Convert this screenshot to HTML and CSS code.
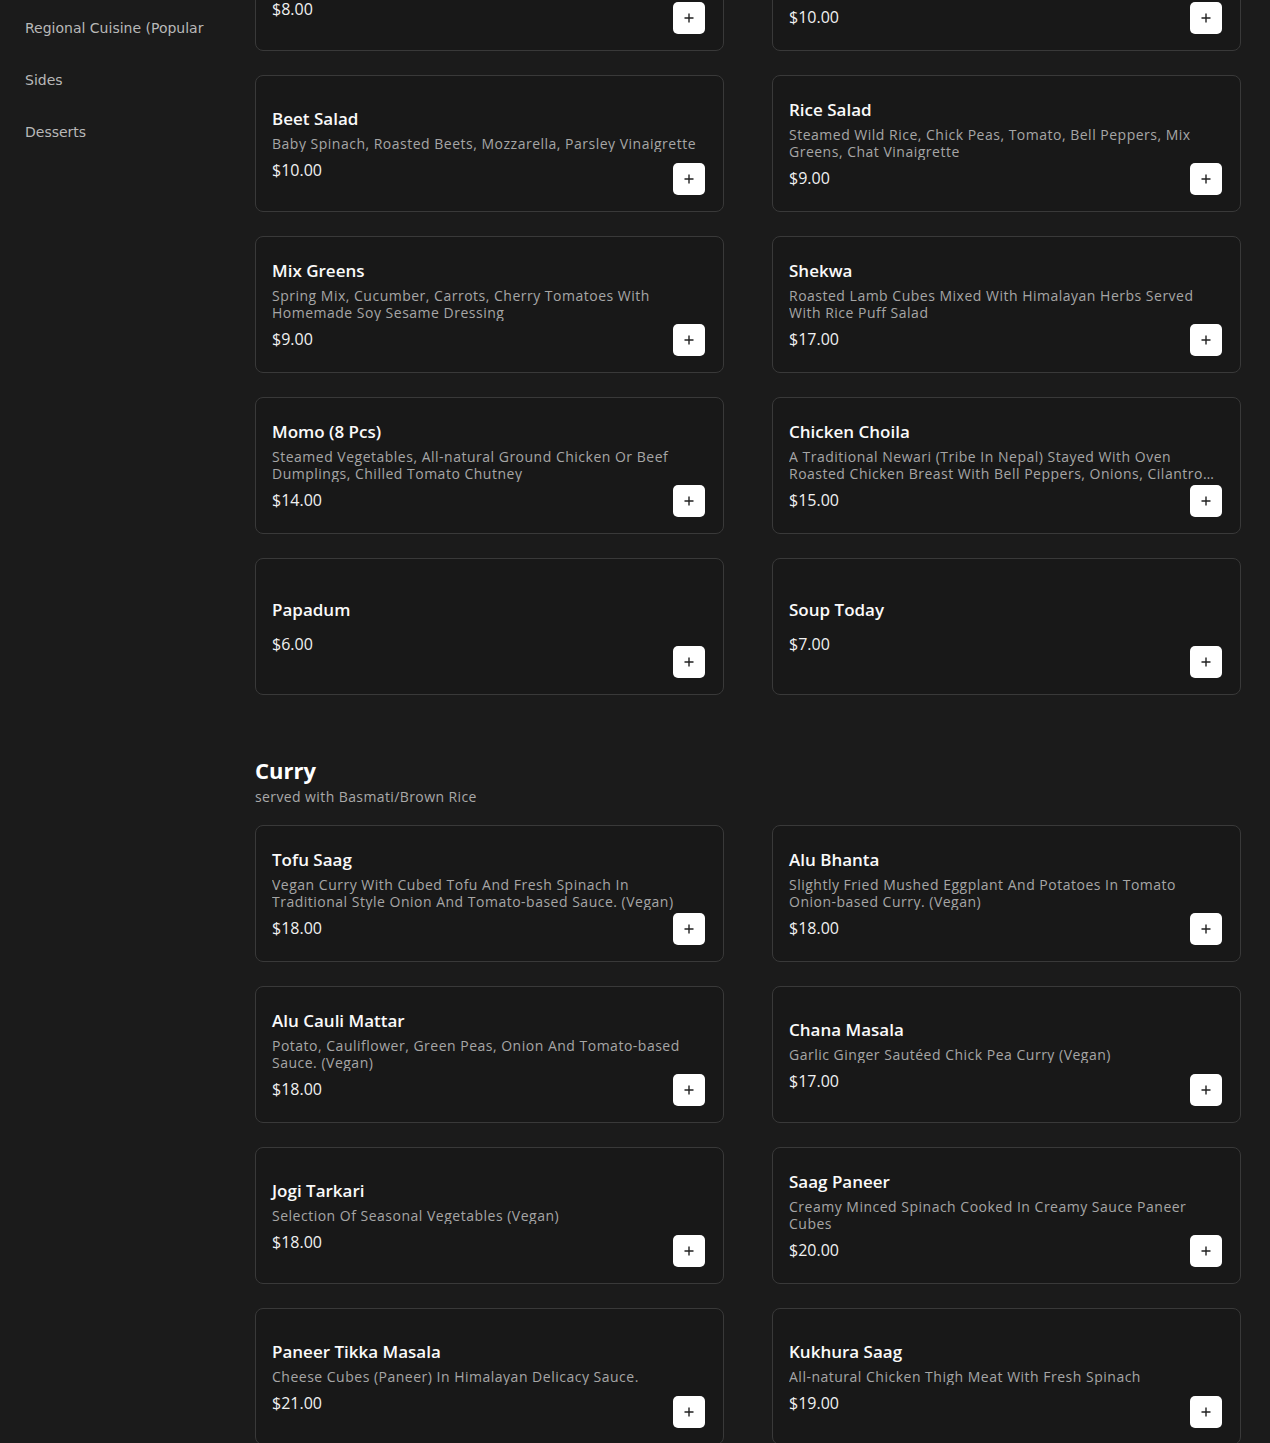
FILE: index.html
```html
<!DOCTYPE html>
<html lang="en">
<head>
  <meta charset="UTF-8">
  <title>Menu</title>
  <meta name="viewport" content="width=device-width, initial-scale=1.0">
  <link rel="stylesheet" href="styles.css">
</head>
<body>
  <div class="page">
    <nav class="sidebar">
      <a class="nav-link" href="#regional">Regional Cuisine (Popular Dishes)</a>
      <a class="nav-link" href="#sides">Sides</a>
      <a class="nav-link" href="#desserts">Desserts</a>
    </nav>

    <main class="main">
      <section class="section" id="appetizers">
        <h2 class="section-title">Appetizers</h2>
        <div class="grid">
          <div class="card">
            <div class="info">
              <h3 class="item-name">House Salad</h3>
              <p class="desc">Mix Greens, Cucumber, Carrots, House Dressing</p>
              <p class="price">$8.00</p>
            </div>
            <button class="add-btn"><svg width="10" height="10" viewBox="0 0 10 10"><path d="M5 0.5v9M0.5 5h9" stroke="#222" stroke-width="1.4"/></svg></button>
          </div>
          <div class="card">
            <div class="info">
              <h3 class="item-name">Chicken Salad</h3>
              <p class="desc">Grilled Chicken, Mix Greens, Tomato, Cucumber, Onion, Lemon Herb Vinaigrette Dressing</p>
              <p class="price">$10.00</p>
            </div>
            <button class="add-btn"><svg width="10" height="10" viewBox="0 0 10 10"><path d="M5 0.5v9M0.5 5h9" stroke="#222" stroke-width="1.4"/></svg></button>
          </div>
          <div class="card">
            <div class="info">
              <h3 class="item-name">Beet Salad</h3>
              <p class="desc">Baby Spinach, Roasted Beets, Mozzarella, Parsley Vinaigrette</p>
              <p class="price">$10.00</p>
            </div>
            <button class="add-btn"><svg width="10" height="10" viewBox="0 0 10 10"><path d="M5 0.5v9M0.5 5h9" stroke="#222" stroke-width="1.4"/></svg></button>
          </div>
          <div class="card">
            <div class="info">
              <h3 class="item-name">Rice Salad</h3>
              <p class="desc">Steamed Wild Rice, Chick Peas, Tomato, Bell Peppers, Mix Greens, Chat Vinaigrette</p>
              <p class="price">$9.00</p>
            </div>
            <button class="add-btn"><svg width="10" height="10" viewBox="0 0 10 10"><path d="M5 0.5v9M0.5 5h9" stroke="#222" stroke-width="1.4"/></svg></button>
          </div>
          <div class="card">
            <div class="info">
              <h3 class="item-name">Mix Greens</h3>
              <p class="desc">Spring Mix, Cucumber, Carrots, Cherry Tomatoes With Homemade Soy Sesame Dressing</p>
              <p class="price">$9.00</p>
            </div>
            <button class="add-btn"><svg width="10" height="10" viewBox="0 0 10 10"><path d="M5 0.5v9M0.5 5h9" stroke="#222" stroke-width="1.4"/></svg></button>
          </div>
          <div class="card">
            <div class="info">
              <h3 class="item-name">Shekwa</h3>
              <p class="desc">Roasted Lamb Cubes Mixed With Himalayan Herbs Served With Rice Puff Salad</p>
              <p class="price">$17.00</p>
            </div>
            <button class="add-btn"><svg width="10" height="10" viewBox="0 0 10 10"><path d="M5 0.5v9M0.5 5h9" stroke="#222" stroke-width="1.4"/></svg></button>
          </div>
          <div class="card">
            <div class="info">
              <h3 class="item-name">Momo (8 Pcs)</h3>
              <p class="desc">Steamed Vegetables, All-natural Ground Chicken Or Beef Dumplings, Chilled Tomato Chutney</p>
              <p class="price">$14.00</p>
            </div>
            <button class="add-btn"><svg width="10" height="10" viewBox="0 0 10 10"><path d="M5 0.5v9M0.5 5h9" stroke="#222" stroke-width="1.4"/></svg></button>
          </div>
          <div class="card">
            <div class="info">
              <h3 class="item-name">Chicken Choila</h3>
              <p class="desc">A Traditional Newari (Tribe In Nepal) Stayed With Oven Roasted Chicken Breast With Bell Peppers, Onions, Cilantro And Himalayan Spices</p>
              <p class="price">$15.00</p>
            </div>
            <button class="add-btn"><svg width="10" height="10" viewBox="0 0 10 10"><path d="M5 0.5v9M0.5 5h9" stroke="#222" stroke-width="1.4"/></svg></button>
          </div>
          <div class="card">
            <div class="info">
              <h3 class="item-name">Papadum</h3>
              <p class="desc"></p>
              <p class="price">$6.00</p>
            </div>
            <button class="add-btn"><svg width="10" height="10" viewBox="0 0 10 10"><path d="M5 0.5v9M0.5 5h9" stroke="#222" stroke-width="1.4"/></svg></button>
          </div>
          <div class="card">
            <div class="info">
              <h3 class="item-name">Soup Today</h3>
              <p class="desc"></p>
              <p class="price">$7.00</p>
            </div>
            <button class="add-btn"><svg width="10" height="10" viewBox="0 0 10 10"><path d="M5 0.5v9M0.5 5h9" stroke="#222" stroke-width="1.4"/></svg></button>
          </div>
        </div>
      </section>

      <section class="section" id="curry">
        <h2 class="section-title">Curry</h2>
        <p class="section-sub">served with Basmati/Brown Rice</p>
        <div class="grid">
          <div class="card">
            <div class="info">
              <h3 class="item-name">Tofu Saag</h3>
              <p class="desc">Vegan Curry With Cubed Tofu And Fresh Spinach In Traditional Style Onion And Tomato-based Sauce. (Vegan)</p>
              <p class="price">$18.00</p>
            </div>
            <button class="add-btn"><svg width="10" height="10" viewBox="0 0 10 10"><path d="M5 0.5v9M0.5 5h9" stroke="#222" stroke-width="1.4"/></svg></button>
          </div>
          <div class="card">
            <div class="info">
              <h3 class="item-name">Alu Bhanta</h3>
              <p class="desc">Slightly Fried Mushed Eggplant And Potatoes In Tomato Onion-based Curry. (Vegan)</p>
              <p class="price">$18.00</p>
            </div>
            <button class="add-btn"><svg width="10" height="10" viewBox="0 0 10 10"><path d="M5 0.5v9M0.5 5h9" stroke="#222" stroke-width="1.4"/></svg></button>
          </div>
          <div class="card">
            <div class="info">
              <h3 class="item-name">Alu Cauli Mattar</h3>
              <p class="desc">Potato, Cauliflower, Green Peas, Onion And Tomato-based Sauce. (Vegan)</p>
              <p class="price">$18.00</p>
            </div>
            <button class="add-btn"><svg width="10" height="10" viewBox="0 0 10 10"><path d="M5 0.5v9M0.5 5h9" stroke="#222" stroke-width="1.4"/></svg></button>
          </div>
          <div class="card">
            <div class="info">
              <h3 class="item-name">Chana Masala</h3>
              <p class="desc">Garlic Ginger Sautéed Chick Pea Curry (Vegan)</p>
              <p class="price">$17.00</p>
            </div>
            <button class="add-btn"><svg width="10" height="10" viewBox="0 0 10 10"><path d="M5 0.5v9M0.5 5h9" stroke="#222" stroke-width="1.4"/></svg></button>
          </div>
          <div class="card">
            <div class="info">
              <h3 class="item-name">Jogi Tarkari</h3>
              <p class="desc">Selection Of Seasonal Vegetables (Vegan)</p>
              <p class="price">$18.00</p>
            </div>
            <button class="add-btn"><svg width="10" height="10" viewBox="0 0 10 10"><path d="M5 0.5v9M0.5 5h9" stroke="#222" stroke-width="1.4"/></svg></button>
          </div>
          <div class="card">
            <div class="info">
              <h3 class="item-name">Saag Paneer</h3>
              <p class="desc">Creamy Minced Spinach Cooked In Creamy Sauce Paneer Cubes</p>
              <p class="price">$20.00</p>
            </div>
            <button class="add-btn"><svg width="10" height="10" viewBox="0 0 10 10"><path d="M5 0.5v9M0.5 5h9" stroke="#222" stroke-width="1.4"/></svg></button>
          </div>
          <div class="card">
            <div class="info">
              <h3 class="item-name">Paneer Tikka Masala</h3>
              <p class="desc">Cheese Cubes (Paneer) In Himalayan Delicacy Sauce.</p>
              <p class="price">$21.00</p>
            </div>
            <button class="add-btn"><svg width="10" height="10" viewBox="0 0 10 10"><path d="M5 0.5v9M0.5 5h9" stroke="#222" stroke-width="1.4"/></svg></button>
          </div>
          <div class="card">
            <div class="info">
              <h3 class="item-name">Kukhura Saag</h3>
              <p class="desc">All-natural Chicken Thigh Meat With Fresh Spinach</p>
              <p class="price">$19.00</p>
            </div>
            <button class="add-btn"><svg width="10" height="10" viewBox="0 0 10 10"><path d="M5 0.5v9M0.5 5h9" stroke="#222" stroke-width="1.4"/></svg></button>
          </div>
        </div>
      </section>
    </main>
  </div>
</body>
</html>
```

FILE: styles.css
```css
body {
  margin: 0;
  background: #1b1b1b;
  color: #f2f2f2;
  font-family: 'Open Sans', sans-serif;
}

.page {
  display: flex;
  align-items: flex-start;
}

.sidebar {
  flex: none;
  width: 230px;
  box-sizing: border-box;
  padding: 18px 20px 0 25px;
  display: flex;
  flex-direction: column;
  gap: 32px;
  font-family: 'DejaVu Sans', sans-serif;
}

.nav-link {
  display: block;
  font-size: 14px;
  line-height: 20px;
  height: 20px;
  overflow: hidden;
  color: #b8b8b8;
  text-decoration: none;
}

.main {
  flex: 1;
  min-width: 0;
  margin: -133px 29px 0 25px;
}

.section + .section {
  margin-top: 61px;
}

.section-title {
  margin: 0;
  font-size: 22px;
  line-height: 28px;
  font-weight: 700;
  color: #fff;
}

.section-sub {
  margin: 4px 0 0;
  font-size: 14px;
  line-height: 18px;
  letter-spacing: 0.4px;
  color: #a9a9a9;
}

.grid {
  display: grid;
  grid-template-columns: 1fr 1fr;
  column-gap: 48px;
  row-gap: 24px;
  margin-top: 19px;
}

.card {
  display: grid;
  min-height: 137px;
  box-sizing: border-box;
  padding: 16px;
  background: #181818;
  border: 1px solid #393939;
  border-radius: 8px;
}

.card > * {
  grid-area: 1 / 1;
}

.info {
  align-self: center;
}

.item-name {
  margin: 0;
  font-size: 17px;
  line-height: 22px;
  font-weight: 600;
  color: #fafafa;
}

.desc {
  margin: 5px 0 0;
  font-size: 14px;
  line-height: 17px;
  letter-spacing: 0.5px;
  color: #a6a6a6;
  display: -webkit-box;
  -webkit-line-clamp: 2;
  -webkit-box-orient: vertical;
  overflow: hidden;
}

.price {
  margin: 8px 0 0;
  font-size: 16px;
  line-height: 20px;
  color: #f0f0f0;
}

.add-btn {
  align-self: end;
  justify-self: end;
  width: 32px;
  height: 32px;
  margin-right: 2px;
  padding: 0;
  border: none;
  border-radius: 5px;
  background: #fff;
  display: flex;
  align-items: center;
  justify-content: center;
  cursor: pointer;
}
```
